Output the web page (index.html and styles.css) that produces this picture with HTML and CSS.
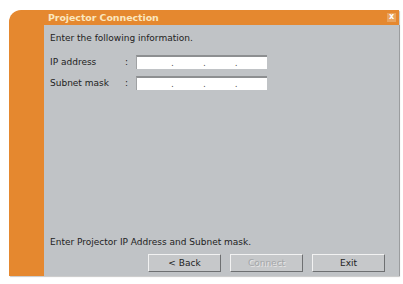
FILE: index.html
```html
<!DOCTYPE html>
<html>
<head>
<meta charset="utf-8">
<link rel="stylesheet" href="styles.css">
</head>
<body>
<div class="dialog">
  <div class="titlebar">
    <span class="title">Projector Connection</span>
    <span class="close">x</span>
  </div>
  <div class="side"></div>
  <div class="panel">
    <p class="intro">Enter the following information.</p>
    <div class="row">
      <span class="label">IP address</span>
      <span class="colon">:</span>
      <div class="ip"><span>.</span><span>.</span><span>.</span></div>
    </div>
    <div class="row">
      <span class="label">Subnet mask</span>
      <span class="colon">:</span>
      <div class="ip"><span>.</span><span>.</span><span>.</span></div>
    </div>
    <div class="spacer"></div>
    <p class="hint">Enter Projector IP Address and Subnet mask.</p>
    <div class="buttons">
      <button class="btn">&lt; Back</button>
      <button class="btn disabled">Connect</button>
      <button class="btn">Exit</button>
    </div>
  </div>
</div>
</body>
</html>
```
FILE: styles.css
```css
html, body {
  margin: 0;
  padding: 0;
  background: #ffffff;
}
body {
  padding: 10px 4px 6px 9px;
  font-family: "DejaVu Sans", sans-serif;
  font-size: 9px;
  color: #222;
}
.dialog {
  width: 390px;
  height: 266px;
  background: #e5882f;
  border-top-left-radius: 12px;
  display: grid;
  grid-template-columns: 35px 1fr;
  grid-template-rows: 15px 1fr;
  box-shadow: 1px 1px 1px #c8c8c8;
}
.titlebar {
  grid-column: 1 / 3;
  display: flex;
  align-items: center;
  justify-content: space-between;
  padding-left: 39px;
  padding-right: 4px;
}
.title {
  color: #fbe6bd;
  font-weight: bold;
  font-size: 9.5px;
  letter-spacing: -0.1px;
}
.close {
  width: 9px;
  height: 9px;
  background: #e9a45f;
  color: #fff;
  font-size: 8px;
  line-height: 8px;
  text-align: center;
  font-weight: bold;
}
.side {
  background: #e5882f;
}
.panel {
  background: #c0c3c6;
  border-right: 1px solid #9a9c9e;
  display: flex;
  flex-direction: column;
  padding: 8px 14px 4px 6px;
}
.intro {
  margin: 0 0 10px 0;
  line-height: 11px;
}
.row {
  display: flex;
  align-items: center;
  height: 15px;
  margin-bottom: 6px;
}
.label {
  width: 75px;
}
.colon {
  width: 11px;
}
.ip {
  box-sizing: border-box;
  width: 131px;
  height: 14px;
  background: #fff;
  border-top: 2px solid #8d8f91;
  border-left: 1px solid #a0a2a4;
  display: flex;
  gap: 29px;
  padding-left: 34px;
  line-height: 12px;
  font-size: 9px;
  color: #555;
}
.spacer {
  flex: 1;
}
.hint {
  margin: 0 0 6px 0;
  line-height: 11px;
}
.buttons {
  display: flex;
  gap: 9px;
  padding-left: 98px;
}
.btn {
  width: 73px;
  height: 18px;
  font-family: "DejaVu Sans", sans-serif;
  font-size: 9px;
  color: #222;
  background: #c6c8ca;
  border: 1px solid #f2f2f2;
  border-right-color: #6e7072;
  border-bottom-color: #6e7072;
  padding: 0;
}
.btn.disabled {
  color: #a4a6a8;
  text-shadow: 1px 1px 0 #e6e6e6;
}
```
